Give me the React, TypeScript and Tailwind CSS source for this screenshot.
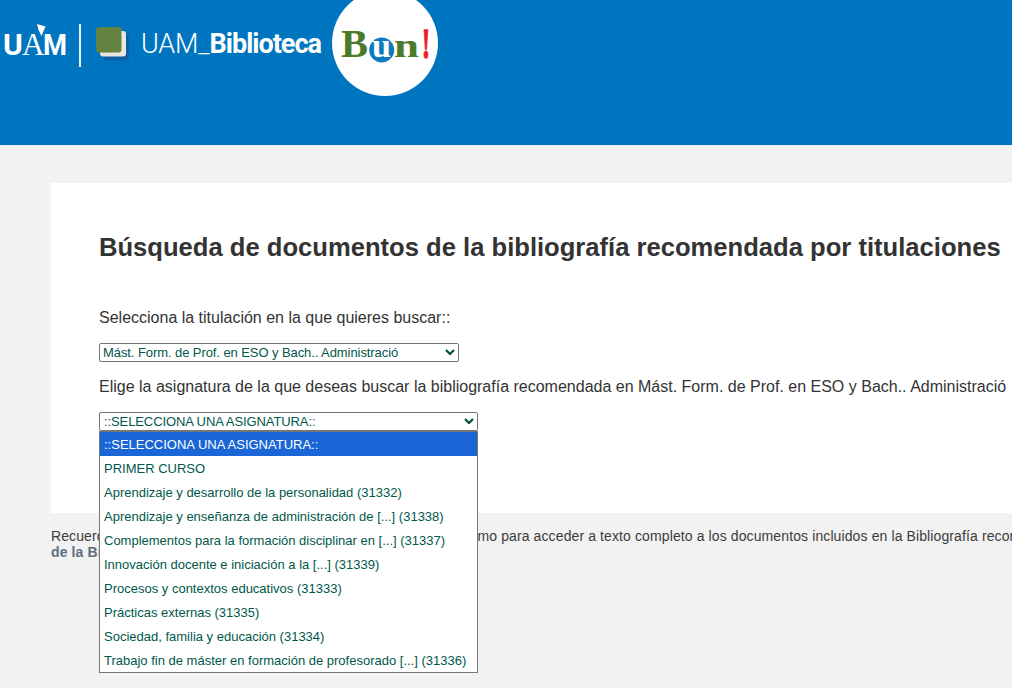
import React from "react";

const options = [
  "PRIMER CURSO",
  "Aprendizaje y desarrollo de la personalidad (31332)",
  "Aprendizaje y enseñanza de administración de [...] (31338)",
  "Complementos para la formación disciplinar en [...] (31337)",
  "Innovación docente e iniciación a la [...] (31339)",
  "Procesos y contextos educativos (31333)",
  "Prácticas externas (31335)",
  "Sociedad, familia y educación (31334)",
  "Trabajo fin de máster en formación de profesorado [...] (31336)",
];

function Chevron() {
  return (
    <svg width="10" height="7" viewBox="0 0 10 7" className="shrink-0">
      <path d="M1 1 5 5 9 1" fill="none" stroke="#004d40" strokeWidth="2.2" />
    </svg>
  );
}

function UamMark() {
  return (
    <svg width="70" height="72" viewBox="0 0 70 72" className="shrink-0">
      <text x="3" y="55" fontFamily="Roboto, sans-serif" fontWeight="700" fontSize="30" fill="#fff">U</text>
      <text x="22" y="55" fontFamily="'Liberation Serif', serif" fontSize="31" fill="#fff">A</text>
      <text x="43" y="55" fontFamily="Roboto, sans-serif" fontWeight="700" fontSize="30" fill="#fff" textLength="24" lengthAdjust="spacingAndGlyphs">M</text>
      <path d="M37 24 45.5 26.5 41.5 36 38.5 30Z" fill="#fff" />
    </svg>
  );
}

function BookMark() {
  return (
    <svg width="34" height="35" viewBox="0 0 34 35" className="shrink-0">
      <rect x="7.5" y="9" width="25.5" height="25.5" rx="3" fill="#0a62a3" />
      <rect x="4" y="5" width="26" height="25.5" rx="3" fill="#e9e7e0" />
      <rect x="0" y="1" width="25.5" height="25.5" rx="3" fill="#63823f" />
    </svg>
  );
}

function BunMark() {
  return (
    <svg width="106" height="106" viewBox="0 0 106 106" className="shrink-0 -mt-[10px]">
      <circle cx="53" cy="53" r="53" fill="#fff" />
      <circle cx="49.7" cy="60" r="12.5" fill="#0f79bd" />
      <g fontFamily="'Liberation Serif', serif" fontWeight="700">
        <text x="9" y="67" fontSize="40" fill="#4a7a2a" textLength="27" lengthAdjust="spacingAndGlyphs">B</text>
        <text x="40" y="67" fontSize="34" fill="#fff" textLength="19" lengthAdjust="spacingAndGlyphs">u</text>
        <text x="62" y="67" fontSize="34" fill="#4a7a2a" textLength="25" lengthAdjust="spacingAndGlyphs">n</text>
        <text x="90" y="68" fontSize="42" fill="#ee1c25" stroke="#ee1c25" strokeWidth="1.4" textLength="8" lengthAdjust="spacingAndGlyphs">!</text>
      </g>
    </svg>
  );
}

export default function App() {
  return (
    <div className="w-[1012px] h-[688px] overflow-hidden bg-[#f2f2f2] font-['Liberation_Sans',Arial,sans-serif] text-[#333333]">
      <header className="h-[145px] bg-[#0075bf] overflow-hidden flex items-start">
        <UamMark />
        <div className="w-[2px] h-[43px] mt-[24px] ml-[9px] bg-white/90 shrink-0" />
        <div className="ml-[15px] mt-[26px]">
          <BookMark />
        </div>
        <div className="ml-[11px] mt-[24px] w-[191px] text-[27px] leading-[40px] tracking-[-0.2px] text-white font-['Roboto',sans-serif] font-light whitespace-nowrap">
          UAM_<span className="font-bold tracking-[-1px]">Biblioteca</span>
        </div>
        <BunMark />
      </header>
      <main className="pt-[38px] pl-[51px]">
        <section className="w-[1100px] h-[330px] bg-white pl-[48px] pt-[49px]">
          <h1 className="text-[25.6px] leading-[30px] font-bold text-[#333333] whitespace-nowrap">
            Búsqueda de documentos de la bibliografía recomendada por titulaciones
          </h1>
          <p className="mt-[44px] text-[16px] leading-[24px] whitespace-nowrap">
            Selecciona la titulación en la que quieres buscar::
          </p>
          <div className="mt-[13px] w-[360px] h-[19px] border border-[#767676] rounded-[2px] bg-white text-[13px] leading-[17px] pl-[3px] pr-[3px] text-[#00584c] tracking-[-0.08px] flex items-center justify-between">
            <span>Mást. Form. de Prof. en ESO y Bach.. Administració</span>
            <Chevron />
          </div>
          <p className="mt-[13px] text-[16px] leading-[24px] whitespace-nowrap">
            Elige la asignatura de la que deseas buscar la bibliografía recomendada en Mást. Form. de Prof. en ESO y Bach.. Administració
          </p>
          <div className="relative mt-[13px] w-[379px]">
            <div className="h-[19px] border border-[#767676] rounded-[2px] bg-white text-[13px] leading-[17px] pl-[4px] pr-[3px] text-[#00584c] tracking-[-0.1px] flex items-center justify-between">
              <span>::SELECCIONA UNA ASIGNATURA::</span>
              <Chevron />
            </div>
            <ul className="absolute left-0 top-[19px] z-10 w-[379px] border border-[#767676] bg-white text-[13px] leading-[24px] text-[#00584c]">
              <li className="h-[24px] bg-[#1a66d6] pl-[4px] pt-px text-white">::SELECCIONA UNA ASIGNATURA::</li>
              {options.map((o) => (
                <li key={o} className="h-[24px] pl-[4px] pt-px whitespace-nowrap">{o}</li>
              ))}
            </ul>
          </div>
        </section>
        <p className="mt-[15px] w-[1100px] text-[14px] leading-[16px] tracking-[0.11px] text-[#3c3c3c]">
          Recuerda que debes identificarte con usuario de la UAM como mínimo para acceder a texto completo a los documentos incluidos en la Bibliografía recomendada
          <br />
          <strong className="text-[#5f6f7c]">de la Biblioteca</strong>
        </p>
      </main>
    </div>
  );
}
